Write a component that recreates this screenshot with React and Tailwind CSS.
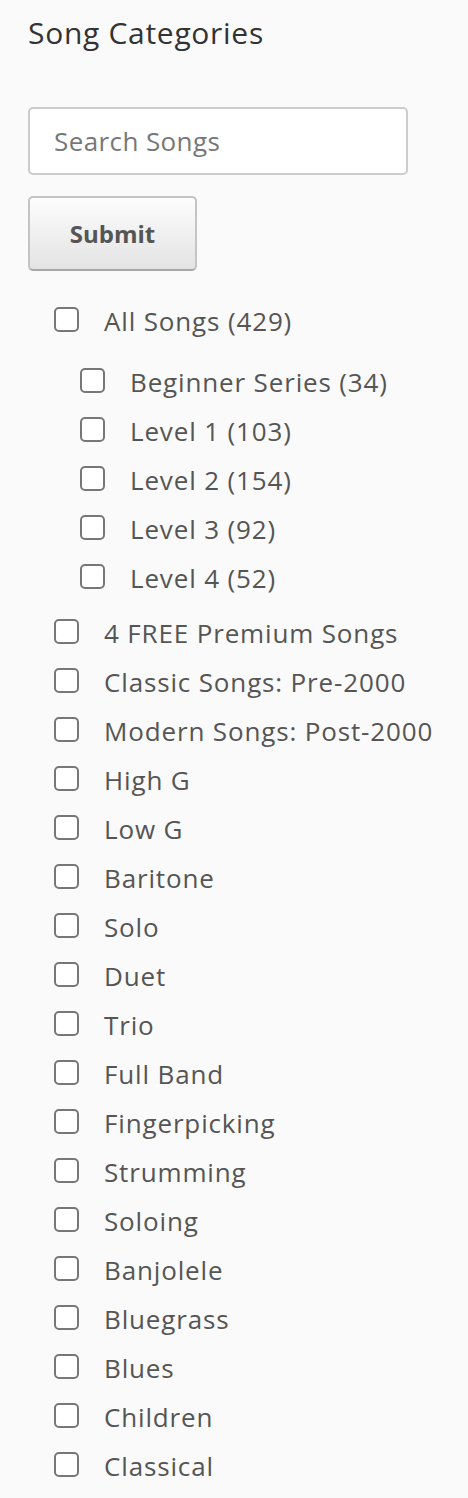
import React from "react";

const levels = [
  "Beginner Series (34)",
  "Level 1 (103)",
  "Level 2 (154)",
  "Level 3 (92)",
  "Level 4 (52)",
];

const categories = [
  "4 FREE Premium Songs",
  "Classic Songs: Pre-2000",
  "Modern Songs: Post-2000",
  "High G",
  "Low G",
  "Baritone",
  "Solo",
  "Duet",
  "Trio",
  "Full Band",
  "Fingerpicking",
  "Strumming",
  "Soloing",
  "Banjolele",
  "Bluegrass",
  "Blues",
  "Children",
  "Classical",
];

const CheckRow = ({ label }) => (
  <li className="flex h-[49px] items-center">
    <span className="h-[25px] w-[25px] shrink-0 rounded-[5px] border-2 border-[#777] bg-white" />
    <span className="pl-[25px] pt-[3px] text-[26px] leading-[49px] tracking-[0.85px] whitespace-nowrap text-[#555]">
      {label}
    </span>
  </li>
);

export default function App() {
  return (
    <div
      className="min-h-screen bg-[#fafafa] px-[28px] pt-[13px] pb-4"
      style={{ fontFamily: '"Open Sans", "Noto Sans", sans-serif' }}
    >
      <h2 className="text-[30px] leading-[40px] tracking-[0.7px] text-[#333]">Song Categories</h2>

      <div className="mt-[54px] flex h-[68px] w-[380px] items-center rounded-[5px] border-2 border-[#ccc] bg-white px-[24px]">
        <span className="text-[26px] tracking-[0.4px] text-[#777]">Search Songs</span>
      </div>

      <button className="mt-[21px] flex h-[75px] w-[169px] items-center justify-center rounded-[5px] border-2 border-[#c4c4c4] border-b-[#a8a8a8] bg-gradient-to-b from-[#fdfdfd] to-[#e3e3e3] text-[24px] font-bold text-[#555]">
        Submit
      </button>

      <ul className="mt-[24px] pl-[26px]">
        <CheckRow label="All Songs (429)" />
        <li>
          <ul className="mt-[12px] pl-[26px]">
            {levels.map((l) => (
              <CheckRow key={l} label={l} />
            ))}
          </ul>
        </li>
      </ul>
      <ul className="mt-[6px] pl-[26px]">
        {categories.map((c) => (
          <CheckRow key={c} label={c} />
        ))}
      </ul>
    </div>
  );
}
